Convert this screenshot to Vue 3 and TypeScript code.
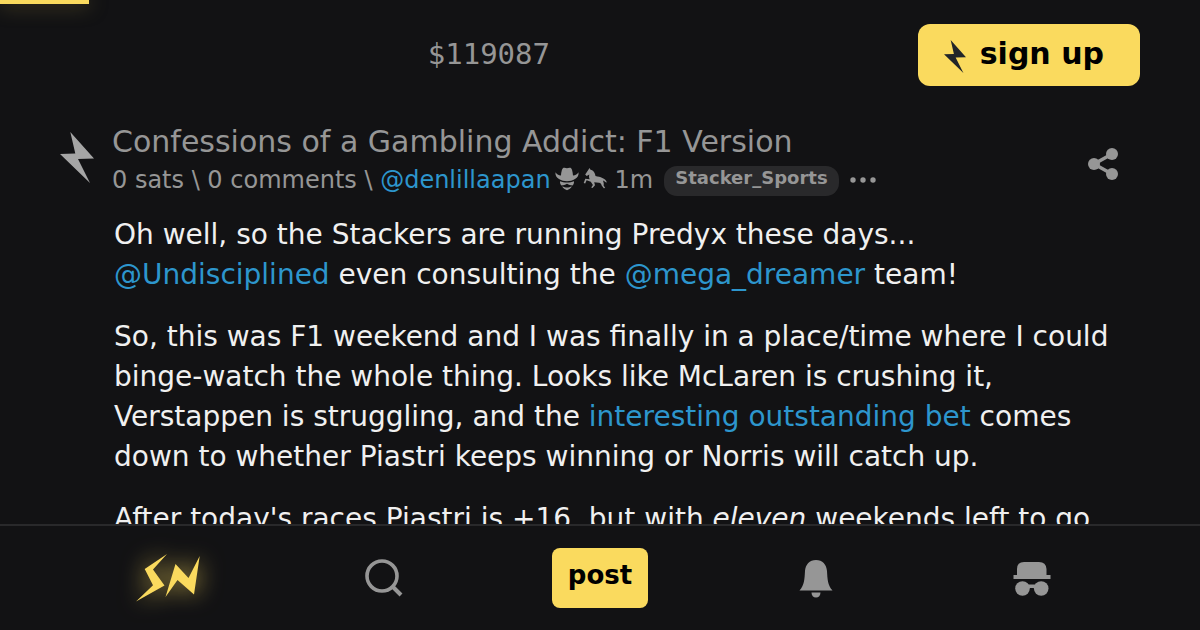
<script setup lang="ts">
const price = '$119087'
const boltPoints = '10.3,0 34,26.6 18,27 30,51 0,22 15.3,21.6'
</script>

<template>
  <div class="page">
    <div class="progress"></div>
    <header class="top">
      <span class="price">{{ price }}</span>
      <button class="signup" type="button">
        <svg class="signup-bolt" viewBox="0 0 34 51" aria-hidden="true"><polygon :points="boltPoints" /></svg>
        sign up
      </button>
    </header>

    <main class="content">
      <div class="item">
        <button class="upvote" type="button" aria-label="zap">
          <svg viewBox="0 0 34 51"><polygon :points="boltPoints" /></svg>
        </button>
        <div class="heading">
          <h1 class="title">Confessions of a Gambling Addict: F1 Version</h1>
          <div class="meta">
            <span>0 sats \ 0 comments \ <a href="#">@denlillaapan</a></span>
            <svg class="hat" viewBox="0 0 24 24" aria-hidden="true">
              <path d="M6 8.500C6.300 5 7 1.500 8.500 .8C10 .3 11 1.200 12 1.200C13 1.200 14 .3 15.500 .8C17 1.500 17.700 5 18 8.500C20.500 8.300 22.500 7 23.500 5.200C24 8 22.500 10.500 20 12C17.500 13.500 15 14.200 12 14.200S6.500 13.500 4 12C1.500 10.500 0 8 .5 5.200C1.500 7 3.500 8.300 6 8.500Z" />
              <path d="M5 14.200C9 16 15 16 19 14.200C19.200 16 18.500 17.500 17.500 18.500C15.500 18.500 14 17.800 12 16.800C10 17.800 8.500 18.500 6.500 18.500C5.500 17.500 4.800 16 5 14.200ZM7 19.500C9 20 10.500 20.500 12 20.500C13.500 20.500 15 20 17 19.500C16 21 14 22.500 12 23.200C10 22.500 8 21 7 19.500Z" />
            </svg>
            <svg class="horse" viewBox="0 0 24 24" aria-hidden="true">
              <path d="M6.500 1L7.500 2.800C10.500 3.200 12 6 12.500 9C15 10 17.500 9.400 19.300 11C21.500 11.500 23.500 13.500 23.800 15.500C22 15.300 21.500 14 20 13.500C20.500 15.500 21.300 17 20.500 18.300L22.200 21L20.800 21.300L18.500 18.200C18.600 17 17.600 16 16 15.700L11.200 15.300L12 18.300L9.500 21L8.200 20.400L9.900 18L7.800 14.800L3.600 13.200L2.200 16.500L.7 16L2.300 11.700L6.700 12.200C5.800 10.600 6 9 6.300 7.400L3.700 9L2.200 7.600L4.900 3.600Z" />
            </svg>
            <span class="age">1m</span>
            <a class="territory" href="#">Stacker_Sports</a>
            <button class="more" type="button" aria-label="more">
              <svg viewBox="0 0 26 6"><circle cx="3" cy="3" r="2.700" /><circle cx="13" cy="3" r="2.700" /><circle cx="23" cy="3" r="2.700" /></svg>
            </button>
          </div>
        </div>
        <button class="share" type="button" aria-label="share">
          <svg viewBox="0 0 32 32"><path d="M24 6L6 16L24 26" fill="none" stroke="currentColor" stroke-width="3.500" /><circle cx="24" cy="6" r="6" /><circle cx="6" cy="16" r="6" /><circle cx="24" cy="26" r="6" /></svg>
        </button>
      </div>

      <article class="text">
        <p>Oh well, so the Stackers are running Predyx these days... <a href="#">@Undisciplined</a> even consulting the <a href="#">@mega_dreamer</a> team!</p>
        <p>So, this was F1 weekend and I was finally in a place/time where I could binge-watch the whole thing. Looks like McLaren is crushing it, Verstappen is struggling, and the <a href="#">interesting outstanding bet</a> comes down to whether Piastri keeps winning or Norris will catch up.</p>
        <p>After today's races Piastri is +16, but with <em>eleven</em> weekends left to go</p>
      </article>
    </main>

    <nav class="bottom">
      <a class="brand" href="#" aria-label="home">
        <svg viewBox="0 0 64 48"><path d="M31 0L17 15.500L28.500 31.500L0 47.500L17 31.300L8.700 15ZM39.500 10L52.500 24L63.700 2L58 40.500L41.500 26L29.500 43Z" /></svg>
      </a>
      <a href="#" aria-label="search">
        <svg class="search" viewBox="0 0 38 38"><circle cx="17" cy="17" r="15" fill="none" stroke="currentColor" stroke-width="3.600" /><path d="M27 27L36 36" stroke="currentColor" stroke-width="4" /></svg>
      </a>
      <button class="post" type="button">post</button>
      <a href="#" aria-label="notifications">
        <svg class="bell" viewBox="0 0 34 38"><path d="M17 0C23.500 0 27.500 4.500 28 11C28.500 19 28.500 25 33.500 30.500H.5C5.500 25 5.500 19 6 11C6.500 4.500 10.500 0 17 0ZM12.500 32.500H21.500C21.500 35.500 19.700 37.500 17 37.500S12.500 35.500 12.500 32.500Z" /></svg>
      </a>
      <a href="#" aria-label="log in">
        <svg class="incognito" viewBox="0 0 38 36"><path d="M4 14V8Q4 1 11 1H26Q33 1 33.500 8V14H37.500V18H.5V14Z" /><circle cx="9.500" cy="27.500" r="7.300" /><circle cx="28.200" cy="27.500" r="7.300" /><path d="M15 23.500H23V27H15Z" /></svg>
      </a>
    </nav>
  </div>
</template>

<style>
body {
  margin: 0;
  background: #121214;
}
</style>

<style scoped>
.page {
  display: flex;
  flex-direction: column;
  height: 100vh;
  overflow: hidden;
  background: #121214;
  color: #f0f0f0;
  font-family: "DejaVu Sans", sans-serif;
}
svg {
  display: block;
  fill: currentColor;
}
a {
  color: #2d96cd;
  text-decoration: none;
}
button {
  margin: 0;
  padding: 0;
  border: 0;
  background: none;
  color: #969696;
  font-family: inherit;
}
.progress {
  position: absolute;
  top: 0;
  left: 0;
  width: 89px;
  height: 4px;
  background: #fada5e;
  box-shadow: 0 0 20px rgba(250, 218, 94, 0.5);
}
.top {
  display: flex;
  align-items: center;
  padding: 24px 60px 0;
}
.price {
  flex: 1;
  padding-bottom: 2px;
  text-align: center;
  color: #969696;
  font: 29px "DejaVu Sans Mono", monospace;
}
.signup {
  display: flex;
  align-items: center;
  gap: 14px;
  height: 62px;
  padding: 0 36px 4px 26px;
  border-radius: 12px;
  background: #fada5e;
  color: #000;
  font-size: 30px;
  font-weight: bold;
}
.signup-bolt {
  width: 22px;
  height: 33px;
  margin-top: 6px;
  color: #212529;
}
.content {
  flex: 1;
  min-height: 0;
  overflow: hidden;
  padding: 36px 60px 0;
}
.item {
  display: flex;
  align-items: flex-start;
}
.upvote {
  width: 52px;
  padding-top: 10px;
}
.upvote svg {
  width: 34px;
  height: 51px;
  color: #a5a5a5;
}
.heading {
  flex: 1;
}
.title {
  margin: 0;
  color: #969696;
  font-size: 30px;
  font-weight: normal;
  line-height: 40px;
}
.meta {
  display: flex;
  align-items: center;
  height: 36px;
  color: #969696;
  font-size: 24px;
  white-space: nowrap;
}
.hat {
  width: 24px;
  height: 24px;
  margin: 0 4px 2px;
}
.horse {
  width: 24px;
  height: 24px;
  margin-bottom: 2px;
}
.age {
  margin: 0 11px 0 8px;
}
.territory {
  height: 30px;
  margin-top: 2px;
  padding: 0 11px;
  border-radius: 13px;
  background: #29292b;
  color: #969696;
  font-size: 18px;
  font-weight: bold;
  line-height: 24px;
}
.more {
  margin-left: 11px;
}
.more svg {
  width: 26px;
  height: 6px;
}
.share {
  padding: 26px 20px 0 0;
}
.share svg {
  width: 32px;
  height: 32px;
}
.text {
  padding: 17px 20px 0 54px;
  font-size: 28px;
  line-height: 40px;
}
.text p {
  margin: 0 0 22px;
}
.bottom {
  display: grid;
  grid-template-columns: repeat(5, 1fr);
  align-items: center;
  justify-items: center;
  height: 104px;
  padding: 0 60px;
  border-top: 2px solid #29292b;
}
.bottom a {
  color: #969696;
}
.bottom .brand {
  color: #fada5e;
  filter: drop-shadow(0 0 12px rgba(250, 218, 94, 0.8));
}
.brand svg {
  width: 64px;
  height: 48px;
}
.search {
  width: 38px;
  height: 38px;
}
.bell {
  width: 34px;
  height: 38px;
  padding-top: 2px;
}
.incognito {
  width: 38px;
  height: 36px;
  padding-top: 2px;
}
.post {
  height: 60px;
  padding: 0 16px 6px;
  border-radius: 8px;
  background: #fada5e;
  color: #000;
  font-size: 26px;
  font-weight: bold;
}
</style>
